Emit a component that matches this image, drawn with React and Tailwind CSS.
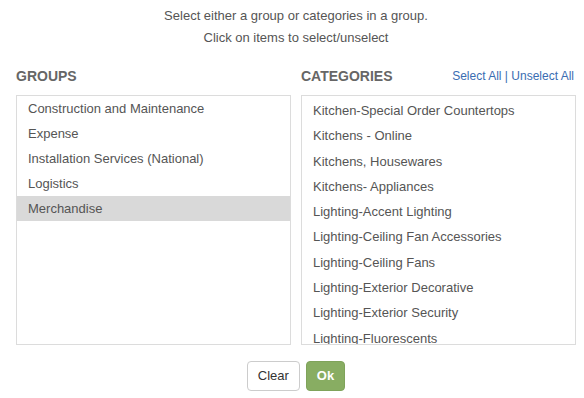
import { useState } from 'react';

const groups = [
  'Construction and Maintenance',
  'Expense',
  'Installation Services (National)',
  'Logistics',
  'Merchandise',
];

const categories = [
  'Kitchen-Special Order Countertops',
  'Kitchens - Online',
  'Kitchens, Housewares',
  'Kitchens- Appliances',
  'Lighting-Accent Lighting',
  'Lighting-Ceiling Fan Accessories',
  'Lighting-Ceiling Fans',
  'Lighting-Exterior Decorative',
  'Lighting-Exterior Security',
  'Lighting-Fluorescents',
  'Lighting-Indoor Decorative',
  'Lighting-Lamps',
];

export default function App() {
  const [group, setGroup] = useState('Merchandise');
  const [selected, setSelected] = useState([]);

  const toggle = (c) =>
    setSelected((s) => (s.includes(c) ? s.filter((x) => x !== c) : [...s, c]));

  return (
    <div className="w-[584px] h-[398px] bg-white pl-4 pr-2 pt-[5px] font-['Liberation_Sans',Arial,sans-serif] text-[13px] text-[#555]">
      {/* Instructions */}
      <div className="text-center leading-[22px]">
        <p>Select either a group or categories in a group.</p>
        <p>Click on items to select/unselect</p>
      </div>

      <div className="flex gap-[10px] mt-[17px]">
        {/* Groups */}
        <div className="w-[275px]">
          <h3 className="text-[14px] font-bold text-[#666] leading-5 mb-[9px]">GROUPS</h3>
          <ul className="h-[250px] border border-[#dcdcdc] overflow-y-auto [scrollbar-width:none]">
            {groups.map((g) => (
              <li
                key={g}
                onClick={() => setGroup(g === group ? null : g)}
                className={`h-[25px] leading-[25px] pl-[11px] cursor-pointer ${
                  g === group ? 'bg-[#d9d9d9]' : ''
                }`}
              >
                {g}
              </li>
            ))}
          </ul>
        </div>

        {/* Categories */}
        <div className="w-[275px]">
          <div className="flex items-center justify-between leading-5 mb-[9px]">
            <h3 className="text-[14px] font-bold text-[#666]">CATEGORIES</h3>
            <div className="text-[12px] text-[#3a6db2] pr-[2px]">
              <button onClick={() => setSelected(categories)}>Select All</button>
              <span> | </span>
              <button onClick={() => setSelected([])}>Unselect All</button>
            </div>
          </div>
          <ul className="h-[250px] border border-[#dcdcdc] pt-[2px] overflow-y-auto [scrollbar-width:none]">
            {categories.map((c) => (
              <li
                key={c}
                onClick={() => toggle(c)}
                className={`h-[25.3px] leading-[25px] pl-[11px] cursor-pointer ${
                  selected.includes(c) ? 'bg-[#d9d9d9]' : ''
                }`}
              >
                {c}
              </li>
            ))}
          </ul>
        </div>
      </div>

      {/* Actions */}
      <div className="flex justify-center gap-[6px] mt-[16px] w-[560px]">
        <button
          onClick={() => {
            setGroup(null);
            setSelected([]);
          }}
          className="h-[30px] px-[10px] bg-white border border-[#cccccc] rounded-[4px] text-[13px] text-[#333]"
        >
          Clear
        </button>
        <button className="h-[30px] px-[10px] bg-[#88ad62] border border-[#7fa35a] rounded-[4px] text-[13px] font-semibold text-white">
          Ok
        </button>
      </div>
    </div>
  );
}
